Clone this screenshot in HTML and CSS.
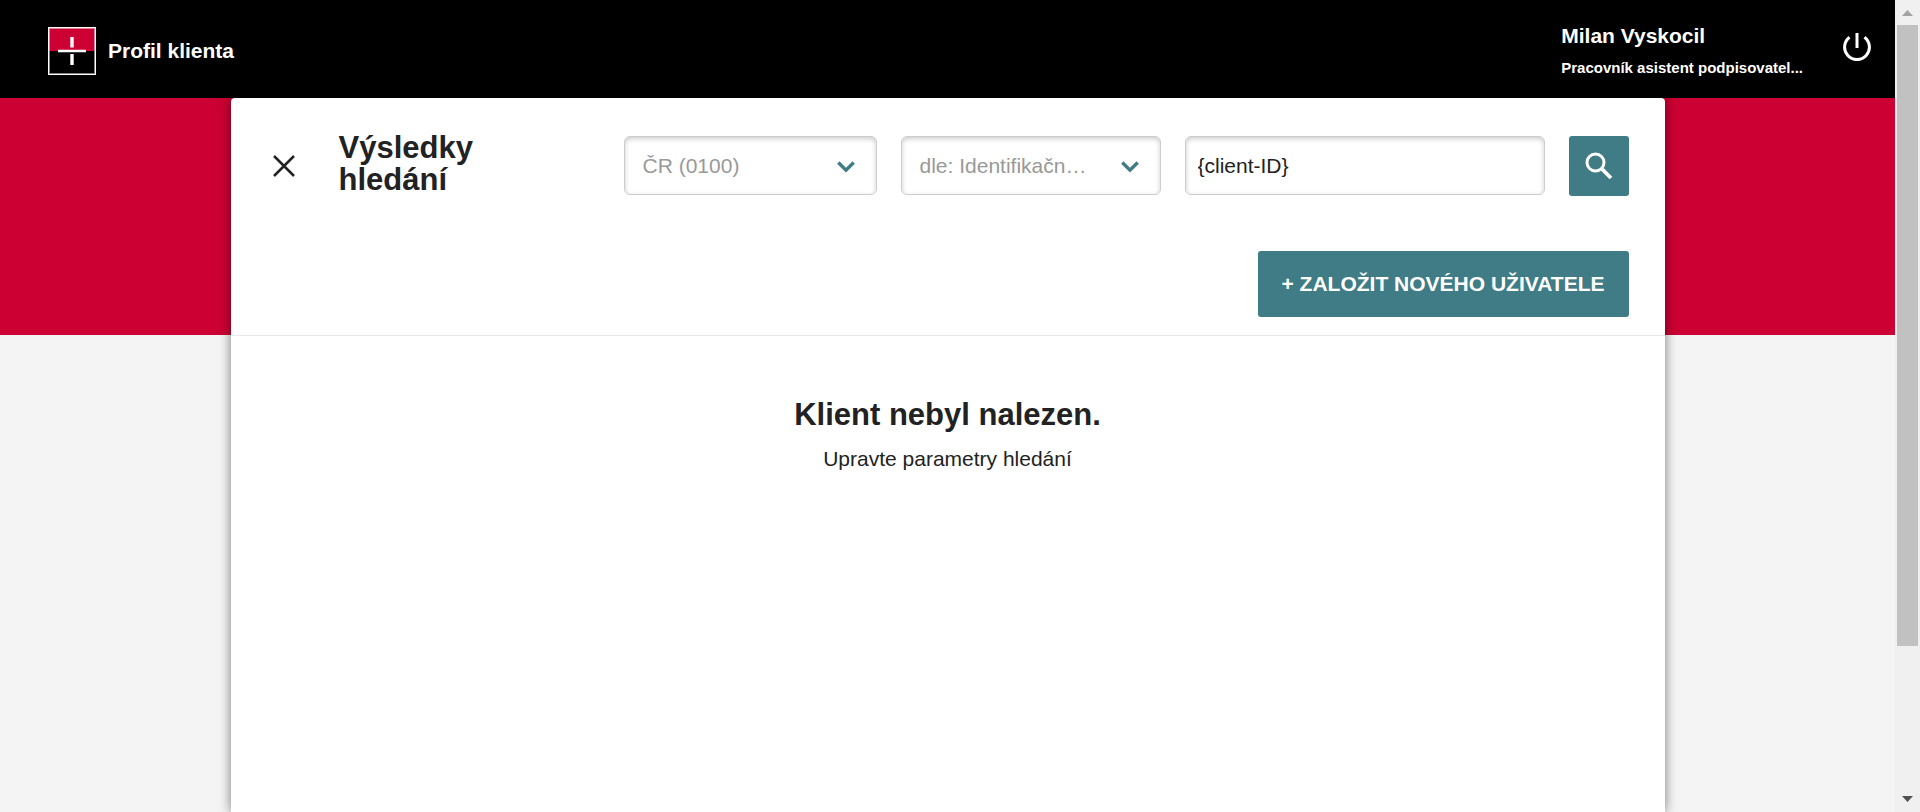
FILE: index.html
```html
<!DOCTYPE html>
<html lang="cs">
<head>
<meta charset="utf-8">
<title>Profil klienta</title>
<link rel="stylesheet" href="styles.css">
</head>
<body>
<div class="page">
  <header class="topbar">
    <a class="brand" href="#">
      <svg class="brand-logo" viewBox="0 0 48 48" aria-hidden="true">
        <rect width="48" height="48" fill="#fff"/>
        <rect x="1" y="1" width="46" height="23" fill="#cc0033"/>
        <rect x="1" y="24" width="46" height="23" fill="#000"/>
        <rect x="1.5" y="1.5" width="45" height="45" fill="none" stroke="#fff" stroke-opacity=".5"/>
        <path d="M22.300 10h3.400v10.500h-3.400zM22.300 27h3.400v11h-3.400zM10 22.700h28v2.600h-28z" fill="#fff"/>
      </svg>
      <span>Profil klienta</span>
    </a>
    <div class="user">
      <div class="user-info">
        <div class="user-name">Milan Vyskocil</div>
        <div class="user-role">Pracovník asistent podpisovatel...</div>
      </div>
      <button class="icon-button power" type="button" aria-label="Odhlásit">
        <svg width="28" height="28" viewBox="0 0 28 28" fill="none" stroke="#fff" stroke-width="3" aria-hidden="true"><path d="M14 0v15M6.500 4.300A12.400 12.400 0 1 0 21.500 4.300"/></svg>
      </button>
    </div>
  </header>
  <main class="content">
    <section class="card">
      <div class="card-head">
        <div class="search-row">
          <button class="icon-button close" type="button" aria-label="Zavřít">
            <svg width="22" height="22" viewBox="0 0 22 22" fill="none" stroke="#222" stroke-width="2.500" aria-hidden="true"><path d="M1 1l20 20M21 1L1 21"/></svg>
          </button>
          <h1 class="title">Výsledky hledání</h1>
          <form class="search">
            <div class="select-box">
              <select class="field" aria-label="Země"><option>ČR (0100)</option></select>
              <svg class="chevron" width="18" height="12" viewBox="0 0 18 12" fill="none" stroke="#407c85" stroke-width="3.400" aria-hidden="true"><path d="M1.300 1.500L9 9.200l7.700-7.700"/></svg>
            </div>
            <div class="select-box">
              <select class="field" aria-label="Hledat dle"><option>dle: Identifikačn…</option></select>
              <svg class="chevron" width="18" height="12" viewBox="0 0 18 12" fill="none" stroke="#407c85" stroke-width="3.400" aria-hidden="true"><path d="M1.300 1.500L9 9.200l7.700-7.700"/></svg>
            </div>
            <input class="field query" type="text" value="{client-ID}" aria-label="Hledaný výraz">
            <button class="search-button" type="submit" aria-label="Hledat">
              <svg width="28" height="28" viewBox="0 0 28 28" fill="none" stroke="#fff" aria-hidden="true"><circle cx="10.500" cy="10.500" r="8.500" stroke-width="3"/><path d="M16.500 16.500l9.500 9.500" stroke-width="3.800"/></svg>
            </button>
          </form>
        </div>
        <div class="actions">
          <button class="create-button" type="button">+ ZALOŽIT NOVÉHO UŽIVATELE</button>
        </div>
      </div>
      <div class="empty">
        <h2 class="empty-title">Klient nebyl nalezen.</h2>
        <p class="empty-text">Upravte parametry hledání</p>
      </div>
    </section>
  </main>
</div>
<div class="scrollbar" aria-hidden="true">
  <svg class="scroll-arrow" viewBox="0 0 25 25"><path d="M7 16l5.500-6L18 16z" fill="#a3a3a3"/></svg>
  <div class="scroll-track"><div class="scroll-thumb"></div></div>
  <svg class="scroll-arrow" viewBox="0 0 25 25"><path d="M7 9l5.500 6L18 9z" fill="#505050"/></svg>
</div>
</body>
</html>
```
FILE: styles.css
```css
* {
  box-sizing: border-box;
}

body {
  margin: 0;
  height: 100vh;
  display: flex;
  overflow: hidden;
  background: #f4f4f4;
  color: #222;
  font: 21px/24px "Liberation Sans", Arial, sans-serif;
}

button {
  font: inherit;
  border: 0;
  cursor: pointer;
}

.page {
  flex: 1;
  min-width: 0;
  display: flex;
  flex-direction: column;
}

.topbar {
  display: flex;
  justify-content: space-between;
  padding: 24px 24px 20px 48px;
  background: #000;
  color: #fff;
  font-weight: bold;
}

.brand {
  display: flex;
  align-items: center;
  gap: 12px;
  color: inherit;
  text-decoration: none;
}

.brand-logo {
  width: 48px;
  height: 48px;
}

.user {
  display: flex;
  align-items: flex-start;
  gap: 40px;
}

.user-info {
  display: flex;
  flex-direction: column;
  gap: 10px;
}

.user-role {
  font-size: 15px;
  line-height: 20px;
}

.icon-button {
  display: flex;
  align-items: center;
  padding: 0;
  background: none;
}

.power {
  height: 46px;
}

.close {
  height: 60px;
}

.content {
  flex: 1;
  display: flex;
  justify-content: center;
  background: linear-gradient(#cc0033 237px, #f4f4f4 237px);
}

.card {
  width: 100%;
  max-width: 1434px;
  background: #fff;
  border-radius: 4px 4px 0 0;
  box-shadow: 0 0 12px rgba(0, 0, 0, 0.5);
}

.card-head {
  padding: 34px 36px 18px 42px;
  border-bottom: 1px solid #e8e8e8;
}

.search-row {
  display: flex;
  align-items: flex-end;
}

.title {
  width: 240px;
  margin: 0 45px 0 44px;
  font-size: 31px;
  line-height: 32px;
}

.search {
  flex: 1;
  display: grid;
  grid-template-columns: 253fr 260fr 360fr 60px;
  gap: 24px;
}

.select-box {
  position: relative;
}

.field {
  width: 100%;
  height: 59px;
  border: 1px solid #ccc;
  border-radius: 6px;
  background: #fff;
  box-shadow: inset 0 2px 5px rgba(0, 0, 0, 0.2);
  color: #222;
  font: inherit;
}

.query {
  padding: 0 12px;
}

.select-box .field {
  padding: 0 50px 0 18px;
  appearance: none;
  color: #999;
}

.chevron {
  position: absolute;
  right: 22px;
  top: 25px;
  pointer-events: none;
}

.search-button {
  width: 60px;
  height: 60px;
  display: flex;
  align-items: center;
  justify-content: center;
  padding: 0;
  border-radius: 3px;
  background: #407c85;
}

.actions {
  display: flex;
  justify-content: flex-end;
  margin-top: 55px;
}

.create-button {
  height: 66px;
  padding: 0 24px;
  border-radius: 3px;
  background: #407c85;
  color: #fff;
  font-weight: bold;
}

.empty {
  padding: 61px 24px;
  text-align: center;
}

.empty-title {
  margin: 0 0 14px;
  font-size: 31px;
  line-height: 36px;
}

.empty-text {
  margin: 0;
}

.scrollbar {
  width: 25px;
  display: flex;
  flex-direction: column;
  background: #f0f0f0;
}

.scroll-arrow {
  width: 25px;
  height: 25px;
}

.scroll-track {
  flex: 1;
  padding: 0 2px;
}

.scroll-thumb {
  height: 81.5%;
  background: #c1c1c1;
}
```
